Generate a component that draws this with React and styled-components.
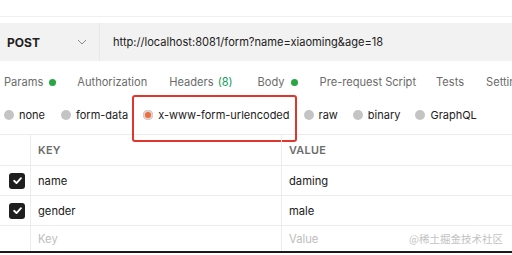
import React from "react";
import styled, { createGlobalStyle } from "styled-components";

const GlobalStyle = createGlobalStyle`
  html, body {
    margin: 0;
    padding: 0;
    background: #ffffff;
    overflow: hidden;
  }
  body {
    font-family: Inter, "Noto Sans CJK SC", sans-serif;
    color: #212121;
  }
`;

const Page = styled.div`
  width: 512px;
  height: 255px;
  position: relative;
  overflow: hidden;
  background: #fff;
`;

const TopStrip = styled.div`
  height: 16px;
  border-bottom: 1px solid #f0f0f0;
  margin-bottom: 6px;
`;

const UrlBar = styled.div`
  height: 38px;
  display: flex;
  align-items: center;
  background: #f2f2f2;
`;

const Method = styled.div`
  width: 100px;
  height: 100%;
  box-sizing: border-box;
  display: flex;
  align-items: center;
  justify-content: space-between;
  padding: 0 12px 0 7px;
  font-size: 12px;
  font-weight: 700;
  color: #212121;
  border-right: 1px solid #e8e8e8;
`;

const Url = styled.div`
  padding-left: 13px;
  font-size: 11.1px;
  color: #212121;
`;

const Tabs = styled.div`
  height: 42px;
  display: flex;
  align-items: center;
  padding-left: 4px;
  white-space: nowrap;
`;

const Tab = styled.div`
  display: flex;
  align-items: center;
  font-size: 11.1px;
  color: #6b6b6b;
  margin-right: ${(p) => p.$gap}px;
`;

const Count = styled.span`
  color: #0f9d58;
  margin-left: 4px;
`;

const Dot = styled.span`
  width: 7px;
  height: 7px;
  border-radius: 50%;
  background: #27a744;
  margin-left: 6px;
`;

const Radios = styled.div`
  height: 24px;
  display: flex;
  align-items: center;
  padding-left: 4px;
  white-space: nowrap;
`;

const RadioItem = styled.label`
  display: flex;
  align-items: center;
  font-size: 11px;
  color: #212121;
  margin-right: ${(p) => p.$gap}px;
`;

const Circle = styled.span`
  width: 10px;
  height: 10px;
  border-radius: 50%;
  background: ${(p) => (p.$on ? "#f26b3a" : "#c4c4c4")};
  box-shadow: ${(p) => (p.$on ? "inset 0 0 0 2px #d6d6d6" : "none")};
  margin-right: 5px;
`;

const Highlight = styled.div`
  position: absolute;
  left: 132px;
  top: 95px;
  width: 165px;
  height: 47px;
  box-sizing: border-box;
  border: 2.5px solid #e0362c;
  border-radius: 3px;
`;

const Table = styled.div`
  margin-top: 7px;
  border-top: 1px solid #ececec;
`;

const Row = styled.div`
  display: grid;
  grid-template-columns: 31px 251px 1fr;
  height: ${(p) => (p.$head ? 30 : p.$last ? 25 : 29)}px;
  border-bottom: 1px solid ${(p) => (p.$last ? "#1a1a1a" : "#ececec")};
  border-bottom-width: ${(p) => (p.$last ? 2 : 1)}px;
`;

const Cell = styled.div`
  display: flex;
  align-items: center;
  padding-left: ${(p) => p.$pad ?? 7}px;
  padding-top: ${(p) => (p.$up ? 0 : 0)}px;
  border-right: ${(p) => (p.$divider ? "1px solid #ececec" : "none")};
  font-size: ${(p) => (p.$head ? 10.8 : 11.2)}px;
  font-weight: ${(p) => (p.$head ? 600 : 400)};
  color: ${(p) => (p.$muted ? "#bdbdbd" : p.$head ? "#6b6b6b" : "#212121")};
  letter-spacing: ${(p) => (p.$head ? "0.3px" : "0")};
  position: relative;
`;

const Box = styled.span`
  width: 16px;
  height: 16px;
  border-radius: 3px;
  background: #1f1f1f;
  display: flex;
  align-items: center;
  justify-content: center;
`;

const Watermark = styled.span`
  position: absolute;
  right: 9px;
  font-size: 10.5px;
  color: #c2c2c2;
  font-family: "Noto Sans CJK SC", sans-serif;
`;

const Check = () => (
  <Box>
    <svg width="11" height="11" viewBox="0 0 12 12">
      <path d="M2.3 6.3 L4.9 8.8 L9.8 3.4" fill="none" stroke="#fff" strokeWidth="2" strokeLinecap="round" strokeLinejoin="round" />
    </svg>
  </Box>
);

const Chevron = () => (
  <svg width="10" height="6" viewBox="0 0 10 6">
    <path d="M1 1 L5 5 L9 1" fill="none" stroke="#8a8a8a" strokeWidth="1" />
  </svg>
);

const tabs = [
  { label: "Params", dot: true, gap: 21 },
  { label: "Authorization", gap: 22 },
  { label: "Headers", count: "(8)", gap: 25 },
  { label: "Body", dot: true, gap: 22 },
  { label: "Pre-request Script", gap: 20 },
  { label: "Tests", gap: 22 },
  { label: "Settings", gap: 0 },
];

const radios = [
  { label: "none", gap: 16 },
  { label: "form-data", gap: 15 },
  { label: "x-www-form-urlencoded", on: true, gap: 14 },
  { label: "raw", gap: 15 },
  { label: "binary", gap: 15 },
  { label: "GraphQL", gap: 0 },
];

export default function App() {
  return (
    <Page>
      <GlobalStyle />
      <TopStrip />
      <UrlBar>
        <Method>
          POST
          <Chevron />
        </Method>
        <Url>http://localhost:8081/form?name=xiaoming&amp;age=18</Url>
      </UrlBar>
      <Tabs>
        {tabs.map((t) => (
          <Tab key={t.label} $gap={t.gap}>
            {t.label}
            {t.count && <Count>{t.count}</Count>}
            {t.dot && <Dot />}
          </Tab>
        ))}
      </Tabs>
      <Radios>
        {radios.map((r) => (
          <RadioItem key={r.label} $gap={r.gap}>
            <Circle $on={r.on} />
            {r.label}
          </RadioItem>
        ))}
      </Radios>
      <Highlight />
      <Table>
        <Row $head>
          <Cell $divider />
          <Cell $head $divider>KEY</Cell>
          <Cell $head>VALUE</Cell>
        </Row>
        <Row>
          <Cell $pad={9} $divider><Check /></Cell>
          <Cell $divider>name</Cell>
          <Cell>daming</Cell>
        </Row>
        <Row>
          <Cell $pad={9} $divider><Check /></Cell>
          <Cell $divider>gender</Cell>
          <Cell>male</Cell>
        </Row>
        <Row $last>
          <Cell $divider />
          <Cell $divider $muted>Key</Cell>
          <Cell $muted>
            Value
            <Watermark>@稀土掘金技术社区</Watermark>
          </Cell>
        </Row>
      </Table>
    </Page>
  );
}
